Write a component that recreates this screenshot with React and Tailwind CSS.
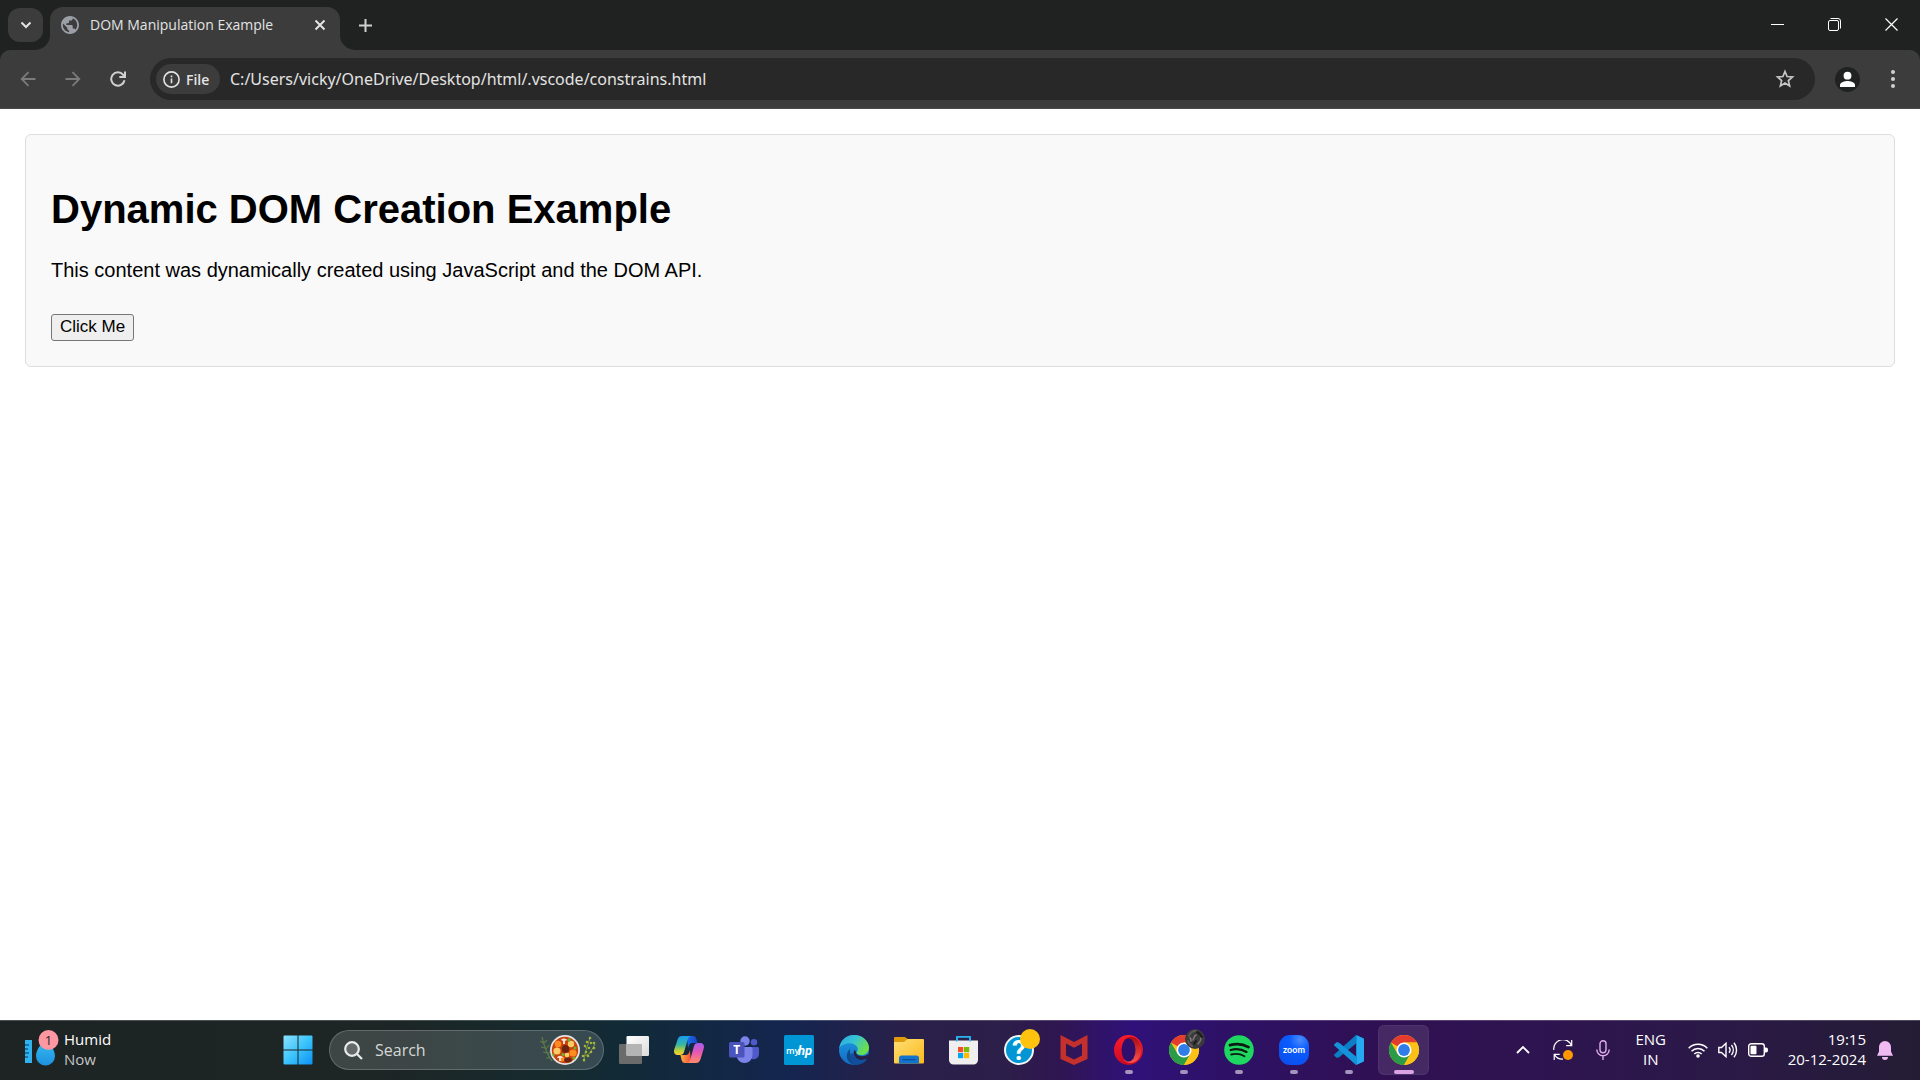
import React from "react";

const UI = "font-['Open_Sans','Noto_Sans',sans-serif]";

function Globe() {
  return (
    <svg viewBox="2 2 20 20" className="size-[18px] shrink-0" aria-hidden="true">
      <path
        d="M12 2C6.48 2 2 6.48 2 12s4.48 10 10 10 10-4.48 10-10S17.52 2 12 2zm-1 17.93c-3.95-.49-7-3.85-7-7.93 0-.62.08-1.21.21-1.79L9 15v1c0 1.1.9 2 2 2v1.93zm6.9-2.54c-.26-.81-1-1.39-1.900-1.39h-1v-3c0-.55-.45-1-1-1H8v-2h2c.55 0 1-.45 1-1V7h2c1.100 0 2-.9 2-2v-.41c2.930 1.190 5 4.060 5 7.410 0 2.080-.8 3.970-2.100 5.390z"
        fill="#9aa0a6"
      />
    </svg>
  );
}

function TabStrip() {
  return (
    <header className="flex h-[50px] shrink-0 items-end bg-[#202221]">
      <button
        aria-label="Search tabs"
        className="mb-2 ml-2 flex h-[34px] w-[35px] items-center justify-center rounded-xl bg-[#3c3c3c]"
      >
        <svg viewBox="0 0 12 8" className="h-2 w-3" fill="none" stroke="#e3e3e3" strokeWidth="2">
          <path d="M1.500 1.500 6 6l4.500-4.500" />
        </svg>
      </button>
      <div className="relative ml-[7px] flex h-[43px] w-[290px] items-center rounded-t-[13px] bg-[#3c3c3c] pb-2 pl-[11px] pr-[10px]">
        <svg viewBox="0 0 15 15" className="absolute -left-[15px] bottom-0 size-[15px]">
          <path d="M15 0v15H0A15 15 0 0 0 15 0z" fill="#3c3c3c" />
        </svg>
        <svg viewBox="0 0 15 15" className="absolute -right-[15px] bottom-0 size-[15px]">
          <path d="M0 0v15h15A15 15 0 0 1 0 0z" fill="#3c3c3c" />
        </svg>
        <Globe />
        <span className="ml-[11px] grow whitespace-nowrap text-[14px] leading-5 text-[#e3e3e3]">
          DOM Manipulation Example
        </span>
        <button aria-label="Close tab" className="flex size-5 items-center justify-center">
          <svg viewBox="0 0 12 12" className="size-3" stroke="#e3e3e3" strokeWidth="2">
            <path d="m1.500 1.500 9 9m0-9-9 9" />
          </svg>
        </button>
      </div>
      <button aria-label="New tab" className="mb-[10px] ml-[10px] flex size-[30px] items-center justify-center">
        <svg viewBox="0 0 13 13" className="size-[13px]" stroke="#d0d0d0" strokeWidth="2">
          <path d="M6.500 0v13M0 6.500h13" />
        </svg>
      </button>
      <div className="ml-auto flex h-12 self-start">
        <button aria-label="Minimize" className="flex w-[57px] items-center justify-center">
          <svg viewBox="0 0 13 13" className="size-[13px]" stroke="#fff" strokeWidth="1">
            <path d="M0 6.500h13" />
          </svg>
        </button>
        <button aria-label="Restore" className="flex w-[57px] items-center justify-center">
          <svg viewBox="0 0 13 13" className="size-[13px]" stroke="#fff" strokeWidth="1" fill="none">
            <rect x=".5" y="2.500" width="10" height="10" rx="1.500" />
            <path d="M2.500.5h7.500a2.500 2.500 0 0 1 2.500 2.500v7.500" />
          </svg>
        </button>
        <button aria-label="Close window" className="flex w-[57px] items-center justify-center">
          <svg viewBox="0 0 13 13" className="size-[13px]" stroke="#fff" strokeWidth="1.200">
            <path d="m.5.5 12 12m0-12-12 12" />
          </svg>
        </button>
      </div>
    </header>
  );
}

function Toolbar() {
  return (
    <div className="shrink-0 bg-[#202221]">
      <div className="flex items-center rounded-t-[10px] border-b border-[#4a4a4a] bg-[#3c3c3c] py-2 px-[5px]">
        <button aria-label="Back" className="flex w-[45px] justify-center">
          <svg viewBox="0 0 16 16" className="size-4" fill="none" stroke="#7b7b7b" strokeWidth="1.800">
            <path d="M15.500 8H2M8.500 1.200 1.700 8l6.800 6.800" />
          </svg>
        </button>
        <button aria-label="Forward" className="flex w-[45px] justify-center">
          <svg viewBox="0 0 16 16" className="size-4" fill="none" stroke="#7b7b7b" strokeWidth="1.800">
            <path d="M.5 8H14M7.500 1.200 14.300 8l-6.800 6.800" />
          </svg>
        </button>
        <button aria-label="Reload" className="flex w-[45px] justify-center">
          <svg viewBox="0 0 16 16" className="size-4" fill="none" stroke="#d0d0d0" strokeWidth="2">
            <path d="M14.500 9.200A6.700 6.700 0 1 1 13.200 3.800L15 5.600" />
            <path d="M15 .5v5.600H9.300" />
          </svg>
        </button>
        <div className="mx-[10px] flex h-[42px] grow items-center rounded-full bg-[#282828] pl-[6px] pr-[10px]">
          <button className="flex h-[30px] w-16 shrink-0 items-center gap-[6px] rounded-full bg-[#3c3c3c] pl-[7px] text-[14px] font-semibold text-[#e3e3e3]">
            <svg viewBox="0 0 17 17" className="size-[17px] shrink-0" fill="none" stroke="#e3e3e3" strokeWidth="1.600">
              <circle cx="8.500" cy="8.500" r="7.600" />
              <path d="M8.500 7.600v4.600M8.500 4.500v1.700" />
            </svg>
            File
          </button>
          <input
            aria-label="Address"
            className="ml-[10px] min-w-0 grow bg-transparent font-['Noto_Sans',sans-serif] text-[16px] leading-6 text-[#e3e3e3] outline-none"
            defaultValue="C:/Users/vicky/OneDrive/Desktop/html/.vscode/constrains.html"
          />
          <button aria-label="Bookmark this page" className="flex w-10 justify-center">
            <svg viewBox="0 0 20 20" className="size-5" fill="none" stroke="#c7c7c7" strokeWidth="1.700">
              <path d="m10 2.500 2.100 5 5.400.5-4.100 3.600 1.200 5.300-4.600-2.800-4.600 2.800 1.200-5.300L2.500 8l5.400-.5z" />
            </svg>
          </button>
        </div>
        <button aria-label="Profile" className="flex w-[45px] justify-center">
          <svg viewBox="0 0 25 25" className="size-[25px]">
            <circle cx="12.500" cy="12.500" r="12.500" fill="#202221" />
            <circle cx="12.500" cy="8.700" r="3.900" fill="#fff" />
            <path d="M5 20v-2c0-2.600 5-4 7.500-4s7.500 1.400 7.500 4v2z" fill="#fff" />
          </svg>
        </button>
        <button aria-label="Menu" className="flex w-[45px] justify-center">
          <svg viewBox="0 0 4 18" className="h-[18px] w-1" fill="#d0d0d0">
            <circle cx="2" cy="2" r="2" />
            <circle cx="2" cy="9" r="2" />
            <circle cx="2" cy="16" r="2" />
          </svg>
        </button>
      </div>
    </div>
  );
}

function Page() {
  return (
    <main className="grow bg-white p-[25px] font-['Liberation_Sans',sans-serif] text-black">
      <section className="rounded-md border border-[#ddd] bg-[#f9f9f9] px-[25px] pb-[25px] pt-[51px]">
        <h1 className="text-[40px] font-bold leading-[46px]">Dynamic DOM Creation Example</h1>
        <p className="mt-[26px] text-[20px] leading-6">
          This content was dynamically created using JavaScript and the DOM API.
        </p>
        <button className="mt-8 block h-[27px] rounded-[3px] border border-[#767676] bg-[#efefef] px-2 pb-[2px] text-[17px] leading-5">
          Click Me
        </button>
      </section>
    </main>
  );
}

function Icon({ children }) {
  return (
    <svg viewBox="0 0 30 30" className="size-[30px] overflow-visible" aria-hidden="true">
      {children}
    </svg>
  );
}

function StartIcon() {
  return (
    <Icon>
      <defs>
        <linearGradient id="win" x1="0" y1="0" x2="30" y2="30" gradientUnits="userSpaceOnUse">
          <stop offset="0" stopColor="#8fe3ff" />
          <stop offset=".5" stopColor="#3cc4fb" />
          <stop offset="1" stopColor="#0a8ff5" />
        </linearGradient>
      </defs>
      <path
        fill="url(#win)"
        d="M1.500 .5H14.500V14.500H.5V1.500a1 1 0 0 1 1-1zM15.500 .5h13a1 1 0 0 1 1 1v13h-14zM.5 15.500h14v14h-13a1 1 0 0 1-1-1zM15.500 15.500h14v13a1 1 0 0 1-1 1h-13z"
      />
    </Icon>
  );
}

function StewArt() {
  return (
    <svg viewBox="0 0 56 32" className="h-8 w-14 shrink-0" aria-hidden="true">
      <g stroke="#5f7848" strokeWidth="1.200" fill="none">
        <path d="M2 3c2 9 4 16 10 24M3 9 0 7M4 9l3-3M5 14l-4-1M6 15l3-4M7 19l-4-1M8 20l3-4M10 24l-4 0" />
      </g>
      <g stroke="#7f9a35" strokeWidth="1" fill="none">
        <path d="M44 28c0-8 3-14 6-24M45 22l5-3 5-9M47 15l-3-4" />
      </g>
      <g fill="#a2b53a">
        <circle cx="50" cy="4" r="1.300" /><circle cx="47" cy="8" r="1.300" /><circle cx="51" cy="9" r="1.300" />
        <circle cx="45" cy="12" r="1.300" /><circle cx="49" cy="14" r="1.300" /><circle cx="54" cy="9" r="1.300" />
        <circle cx="54" cy="14" r="1.300" /><circle cx="51" cy="18" r="1.300" /><circle cx="46" cy="18" r="1.300" />
        <circle cx="48" cy="22" r="1.300" /><circle cx="43" cy="22" r="1.300" /><circle cx="44" cy="26" r="1.300" />
      </g>
      <circle cx="25" cy="16" r="15" fill="#e6e3e1" />
      <circle cx="25" cy="16" r="13.200" fill="#c9420e" />
      <g fill="#ff8a1f">
        <circle cx="18" cy="10" r="3.300" /><circle cx="33" cy="19" r="3.600" /><circle cx="22" cy="25" r="2.500" />
      </g>
      <g fill="#ffc965">
        <circle cx="17" cy="17" r="3.600" /><circle cx="31" cy="10" r="3.200" /><circle cx="27" cy="21" r="2.400" />
      </g>
      <g fill="#6b2410">
        <ellipse cx="25.500" cy="15" rx="3.600" ry="4" /><ellipse cx="28" cy="26" rx="3.800" ry="2.500" />
      </g>
      <g fill="#f7e2d2">
        <path d="M21 6c1-2 5-2 6 0l-2 1v3h-2V7zM17 24c1-3 5-3 6 0l-2 0v3h-2v-3z" />
      </g>
      <g fill="#69b52c">
        <circle cx="29" cy="6" r="1.700" /><circle cx="23" cy="20.500" r="1.600" /><circle cx="35" cy="14" r="1.500" />
        <circle cx="13.500" cy="21" r="1.200" /><circle cx="34" cy="24" r="1.500" />
      </g>
    </svg>
  );
}

function TaskViewIcon() {
  return (
    <Icon>
      <defs>
        <linearGradient id="tv" x1="0" y1="0" x2="1" y2="1">
          <stop offset="0" stopColor="#fff" />
          <stop offset="1" stopColor="#dcdcdc" />
        </linearGradient>
      </defs>
      <rect x="0" y="9" width="23" height="20" rx="1.200" fill="#6b6b6b" />
      <rect x="7.500" y="1" width="22.500" height="20" rx="1.200" fill="url(#tv)" />
      <path d="M7.500 9H22a1 1 0 0 1 1 1v11H8.500a1 1 0 0 1-1-1z" fill="#b4b4b4" />
    </Icon>
  );
}

function CopilotIcon() {
  return (
    <Icon>
      <defs>
        <linearGradient id="cpA" x1="0" y1="0" x2="0" y2="1">
          <stop offset="0" stopColor="#1a9bf0" />
          <stop offset=".45" stopColor="#35b6a4" />
          <stop offset=".75" stopColor="#b8cf3c" />
          <stop offset="1" stopColor="#ffd02e" />
        </linearGradient>
        <linearGradient id="cpB" x1="0" y1="0" x2="0" y2="1">
          <stop offset="0" stopColor="#a65df0" />
          <stop offset=".45" stopColor="#e557b4" />
          <stop offset="1" stopColor="#ff8a66" />
        </linearGradient>
        <linearGradient id="cpC" x1="0" y1="0" x2="1" y2="0">
          <stop offset="0" stopColor="#1c6fe8" />
          <stop offset="1" stopColor="#1840c8" />
        </linearGradient>
        <linearGradient id="cpD" x1="0" y1="0" x2="1" y2="0">
          <stop offset="0" stopColor="#ffae3d" />
          <stop offset="1" stopColor="#f0503c" />
        </linearGradient>
      </defs>
      <path d="M13 1h6c2 0 2.800 1 3.400 3L23.600 8h-5c-3 0-3.600 2-4.600 5z" fill="url(#cpC)" />
      <path d="M17 28h-6c-2 0-2.800-1-3.400-3L6.400 20h5c3 0 3.600-2 4.600-5z" fill="url(#cpD)" />
      <path d="M8 1h9c-2 .4-2.800 2-3.400 4L10 17c-.8 2.200-1.800 3-4 3H4c-3.500 0-4.700-2.500-3.600-6L3.600 4.500C4.500 2 5.800 1 8 1z" fill="url(#cpA)" />
      <path d="M22 28h-9c2-.4 2.800-2 3.400-4L20 11c.8-2.200 1.800-3 4-3h2c3.500 0 4.700 2.500 3.600 6l-3.200 10.500C25.500 27 24.200 28 22 28z" fill="url(#cpB)" />
    </Icon>
  );
}

function TeamsIcon() {
  return (
    <Icon>
      <circle cx="25" cy="7.300" r="3.200" fill="#5059c9" />
      <path d="M21 12h7.500c.8 0 1.500.7 1.500 1.500V19a5.500 5.500 0 0 1-9 4z" fill="#5059c9" />
      <circle cx="16" cy="6" r="4.700" fill="#7b83eb" />
      <path d="M9 12h13a1.500 1.500 0 0 1 1.500 1.500V20a8 8 0 0 1-16 0v-6.500C7.500 12.700 8 12 9 12z" fill="#7b83eb" />
      <rect x="0" y="7" width="15.500" height="15.500" rx="1.500" fill="#4b53bc" />
      <text x="7.700" y="19" textAnchor="middle" fontSize="12" fontWeight="700" fill="#fff" fontFamily="Open Sans, sans-serif">T</text>
    </Icon>
  );
}

function HpIcon() {
  return (
    <Icon>
      <rect width="30" height="30" rx="1.500" fill="#0096d6" />
      <text x="2" y="18.500" fontSize="9" fontWeight="600" fill="#fff" fontFamily="Open Sans, sans-serif">my</text>
      <text x="14" y="20" fontSize="13" fontWeight="700" fontStyle="italic" fill="#fff" fontFamily="Roboto, sans-serif">hp</text>
    </Icon>
  );
}

function EdgeIcon() {
  return (
    <Icon>
      <defs>
        <linearGradient id="edA" x1="0" y1="0" x2="1" y2=".5">
          <stop offset="0" stopColor="#2aa7e0" />
          <stop offset=".5" stopColor="#36c3d6" />
          <stop offset="1" stopColor="#6be04a" />
        </linearGradient>
        <linearGradient id="edB" x1="0" y1="0" x2="0" y2="1">
          <stop offset="0" stopColor="#1b9de2" />
          <stop offset="1" stopColor="#1569c4" />
        </linearGradient>
      </defs>
      <circle cx="15" cy="15" r="15" fill="url(#edB)" />
      <path d="M11 17c0 7 6 12 17 7.500A15 15 0 0 1 17 30C8 29 5 20 11 14z" fill="#114a8b" />
      <path d="M.3 13C1.500 5 7.500 0 15 0c9 0 15 6.500 15 12.500 0 5-3.500 7.500-7.500 7.500-3 0-5-1-5-2.200 0-.9 1.300-1.300 1.300-3.600 0-2.900-3.300-6-8-6-4.800 0-9 2.500-10.500 4.800z" fill="url(#edA)" />
      <path d="M17 17.500c0 1.500 2 3.700 6 3.700 2.500 0 4.500-.7 6-1.900l.5.200c-.5 2-1 3-1.800 4.200-6.500 3-12.700.6-13.200-5 0-1.500.5-3 1.500-4z" fill="#272148" />
      <path d="M15.500 20c1.500 5 7 6.500 12.500 4-2 3-6 5.600-10 5.800C12 29 10 22 12 18z" fill="#114f9c" />
    </Icon>
  );
}

function FolderIcon() {
  return (
    <Icon>
      <defs>
        <linearGradient id="fo" x1="0" y1="0" x2="1" y2="1">
          <stop offset="0" stopColor="#ffdf75" />
          <stop offset="1" stopColor="#fbb91c" />
        </linearGradient>
      </defs>
      <path d="M1 2h9.500c1.200 0 1.700 1.500 3 1.500V9H0V3a1 1 0 0 1 1-1z" fill="#e09b0a" />
      <path d="M0 7h10l3.500-3H29a1 1 0 0 1 1 1v22.500a1 1 0 0 1-1 1H1a1 1 0 0 1-1-1z" fill="url(#fo)" />
      <path d="M5 28.500V23c0-1.400 1-2.500 2.500-2.500h15c1.500 0 2.500 1.100 2.500 2.500v5.500z" fill="#1374cf" />
      <path d="M8.500 24.700h13" stroke="#0a4d95" strokeWidth="1.300" />
    </Icon>
  );
}

function StoreIcon() {
  return (
    <Icon>
      <path d="M8 7V1.800h13V7" fill="none" stroke="#2bb3f0" strokeWidth="1.800" />
      <path d="M0 5.500h29V25a4.500 4.500 0 0 1-4.500 4.500h-20A4.500 4.500 0 0 1 0 25z" fill="#efefef" />
      <path d="M7.800 3v3.500M21.200 3v3.500" stroke="#2bb3f0" strokeWidth="1.600" />
      <rect x="9" y="12" width="5.200" height="5.200" fill="#f25022" />
      <rect x="15" y="12" width="5.200" height="5.200" fill="#7fba00" />
      <rect x="9" y="18" width="5.200" height="5.200" fill="#00a4ef" />
      <rect x="15" y="18" width="5.200" height="5.200" fill="#ffb900" />
    </Icon>
  );
}

function HelpIcon() {
  return (
    <Icon>
      <circle cx="15" cy="15" r="14" fill="#0096d6" stroke="#f4f4f4" strokeWidth="2" />
      <text x="15" y="25" textAnchor="middle" fontSize="28" fontWeight="700" fill="#fff" fontFamily="Roboto, sans-serif">?</text>
      <circle cx="26" cy="4" r="10" fill="#ffc20e" />
    </Icon>
  );
}

function McAfeeIcon() {
  return (
    <Icon>
      <path
        fillRule="evenodd"
        fill="#c4302c"
        d="M1.500 0 15 7 28.500 0v24L15 30 1.500 24zM7 8.500v12l8 4 8-4v-12l-8 4.200z"
      />
    </Icon>
  );
}

function OperaIcon() {
  return (
    <Icon>
      <defs>
        <linearGradient id="opA" x1="0" y1="0" x2="0" y2="1">
          <stop offset="0" stopColor="#ff1b2d" />
          <stop offset="1" stopColor="#c80a20" />
        </linearGradient>
        <linearGradient id="opB" x1="0" y1="0" x2="0" y2="1">
          <stop offset="0" stopColor="#a80a10" />
          <stop offset="1" stopColor="#ff5550" />
        </linearGradient>
      </defs>
      <ellipse cx="14.500" cy="15" rx="14.500" ry="15" fill="url(#opA)" />
      <path d="M10 5c3-3.500 9-4 13-.5a15 15 0 0 1 0 21c-4 3.500-10 3-13-.5z" fill="url(#opB)" />
      <ellipse cx="14.500" cy="15" rx="7" ry="11.500" fill="#300f6c" />
    </Icon>
  );
}

function ChromeMark() {
  return (
    <g>
      <circle cx="15" cy="15" r="15" fill="#fbc116" />
      <path d="M15 15 2 7.500A15 15 0 0 1 28 7.500H15z" fill="#e33b2e" />
      <path d="M2 7.500A15 15 0 0 0 15 30l6.500-11.200L15 15 8.500 18.800z" fill="#2a9b46" />
      <path d="M21.500 18.700 15 30A15 15 0 0 0 28 7.500H15z" fill="#fbc116" />
      <circle cx="15" cy="15" r="7.500" fill="#fff" />
      <circle cx="15" cy="15" r="5.900" fill="#2f7de9" />
    </g>
  );
}

function ChromeProfileIcon() {
  return (
    <Icon>
      <ChromeMark />
      <circle cx="26" cy="4" r="10" fill="#3a3a3a" />
      <g fill="none" strokeLinecap="round">
        <path d="M20 1c1-3 4-5 7-5M19 6c1 3 2 4 4 5" stroke="#5a5a5a" strokeWidth="2" />
        <path d="M24 5c1-2 1-4 3-5M29 9c2-2 3-3 3-6" stroke="#777" strokeWidth="1.600" />
        <path d="M28-3c2 1 4 3 5 5M25 9l2-3" stroke="#1c1c1c" strokeWidth="2" />
        <path d="M21 3c1 0 1 2 1 3" stroke="#8a8a8a" strokeWidth="1.400" />
      </g>
    </Icon>
  );
}

function ChromeIcon() {
  return (
    <Icon>
      <ChromeMark />
    </Icon>
  );
}

function SpotifyIcon() {
  return (
    <Icon>
      <circle cx="15" cy="15" r="14.800" fill="#1ed760" />
      <g fill="none" stroke="#0c1a12" strokeLinecap="round">
        <path d="M6 10.200c6-1.700 13-1.200 18.500 1.900" strokeWidth="2.800" />
        <path d="M6.700 15c5.200-1.500 11-.9 15.800 1.900" strokeWidth="2.300" />
        <path d="M7.200 19.500c4.700-1.200 9.200-.7 13.300 1.700" strokeWidth="1.900" />
      </g>
    </Icon>
  );
}

function ZoomIcon() {
  return (
    <Icon>
      <defs>
        <radialGradient id="zo" cx=".7" cy=".15" r=".9">
          <stop offset="0" stopColor="#4a8cff" />
          <stop offset=".4" stopColor="#0b5cff" />
          <stop offset="1" stopColor="#0b50ee" />
        </radialGradient>
      </defs>
      <rect width="30" height="30" rx="11" fill="url(#zo)" />
      <text x="15" y="17.500" textAnchor="middle" fontSize="9" fontWeight="700" fill="#fff" fontFamily="Lato, sans-serif">zoom</text>
    </Icon>
  );
}

function CodeIcon() {
  return (
    <Icon>
      <path d="M22 0 30 3.500V26.500L22 30 V8.500L5.500 22 3 23 .5 21c-.6-.6-.5-1.300 0-1.800z" fill="#0b7ec4" />
      <path d="M22 30V21.500L5.500 8 3 7 .5 9c-.6.6-.5 1.300 0 1.800z" fill="#1593da" />
      <path d="M22 0 29 3.200c.6.300 1 .9 1 1.500v20.600c0 .6-.4 1.200-1 1.500L22 30c.5-.3.600-.7.600-1.300V1.300c0-.6-.1-1-.6-1.300z" fill="#27a9f2" />
    </Icon>
  );
}

const APPS = [
  { name: "Task view", icon: TaskViewIcon },
  { name: "Copilot", icon: CopilotIcon },
  { name: "Teams", icon: TeamsIcon },
  { name: "myHP", icon: HpIcon },
  { name: "Edge", icon: EdgeIcon },
  { name: "File Explorer", icon: FolderIcon },
  { name: "Store", icon: StoreIcon },
  { name: "Support", icon: HelpIcon },
  { name: "McAfee", icon: McAfeeIcon },
  { name: "Opera", icon: OperaIcon, open: true },
  { name: "Chrome profile", icon: ChromeProfileIcon, open: true },
  { name: "Spotify", icon: SpotifyIcon, open: true },
  { name: "Zoom", icon: ZoomIcon, open: true },
  { name: "Code", icon: CodeIcon, open: true },
  { name: "Chrome", icon: ChromeIcon, active: true },
];

function AppButton({ name, icon: Glyph, open, active }) {
  return (
    <button
      aria-label={name}
      className={`relative mx-[2px] flex h-[50px] w-[51px] items-center justify-center rounded-md border ${
        active ? "border-white/5 bg-white/10" : "border-transparent"
      }`}
    >
      <Glyph />
      {open && <span className="absolute bottom-0 h-1 w-2 rounded-full bg-[#a493bd]" />}
      {active && <span className="absolute bottom-0 h-1 w-5 rounded-full bg-[#dba2e6]" />}
    </button>
  );
}

function WeatherIcon() {
  return (
    <svg viewBox="0 0 36 38" className="h-[38px] w-9" aria-hidden="true">
      <defs>
        <linearGradient id="drop" x1="0" y1="0" x2="0" y2="1">
          <stop offset="0" stopColor="#37c2f2" />
          <stop offset="1" stopColor="#1e90df" />
        </linearGradient>
      </defs>
      <rect x="0" y="10" width="7" height="23" fill="#2fb2ee" />
      <path d="M0 15h4M0 19h3M0 23h4M0 27h3" stroke="#0d5f96" strokeWidth="1.300" />
      <path d="M20.500 8c3 5 9.500 11 9.500 18a9.500 9.500 0 0 1-19 0c0-7 6.500-13 9.500-18z" fill="url(#drop)" />
      <circle cx="23.500" cy="10" r="10" fill="#fd98a3" />
      <text x="23.500" y="15" textAnchor="middle" fontSize="13" fill="#222" fontFamily="Open Sans, sans-serif">1</text>
    </svg>
  );
}

function Tray() {
  return (
    <div className="ml-auto flex shrink-0 items-center text-[15px] leading-5 text-white">
      <button aria-label="Show hidden icons" className="flex w-10 justify-center">
        <svg viewBox="0 0 14 8" className="h-2 w-[14px]" fill="none" stroke="#fff" strokeWidth="1.800">
          <path d="m1 7 6-6 6 6" />
        </svg>
      </button>
      <button aria-label="Update" className="flex w-10 justify-center">
        <svg viewBox="0 0 20 20" className="size-5" fill="none" stroke="#fff" strokeWidth="1.200">
          <path d="M.8 10A9.200 9.200 0 0 1 18.500 5.500M18.700 0v5.600h-5.500M1.200 20v-5.600h5.500M1.500 14.600A9.200 9.200 0 0 0 10 19.200" />
          <circle cx="15" cy="15" r="5" fill="#ff9800" stroke="none" />
        </svg>
      </button>
      <button aria-label="Microphone" className="flex w-10 justify-center">
        <svg viewBox="0 0 14 20" className="h-5 w-[14px]" fill="none" stroke="#dfaee8" strokeWidth="1.400">
          <rect x="4" y=".8" width="6" height="12" rx="3" />
          <path d="M.8 9.500a6.200 6.200 0 0 0 12.400 0M7 15.700V20" />
        </svg>
      </button>
      <button className="w-14 pb-[2px] text-center">
        ENG
        <br />
        IN
      </button>
      <button aria-label="Network, volume and battery" className="ml-[9px] flex items-center gap-[10px]">
        <svg viewBox="0 0 20 16" className="h-4 w-5" fill="none" stroke="#fff" strokeWidth="1.500">
          <path d="M.7 6.200a13 13 0 0 1 18.600 0M3.500 9.200a9 9 0 0 1 13 0M6.300 12a5.200 5.200 0 0 1 7.400 0" />
          <circle cx="10" cy="14" r="1.800" fill="#fff" stroke="none" />
        </svg>
        <svg viewBox="0 0 20 16" className="h-4 w-5" fill="none" stroke="#fff" strokeWidth="1.400">
          <path d="M.8 5.500h2.700L8 1.300v13.400l-4.500-4.200H.8zM11 5.200a4.500 4.500 0 0 1 0 5.600M13.500 3a8 8 0 0 1 0 10M16 .8a11.500 11.500 0 0 1 0 14.400" />
        </svg>
        <svg viewBox="0 0 20 14" className="h-[14px] w-5" fill="none" stroke="#fff" strokeWidth="1.400">
          <rect x=".7" y=".7" width="15.600" height="12.600" rx="2.600" />
          <rect x="2.500" y="2.800" width="6" height="8.400" rx="1" fill="#fff" stroke="none" />
          <path d="M17 4.500h1.200c1 0 1.800.8 1.800 2.500s-.8 2.500-1.800 2.500H17z" fill="#fff" stroke="none" />
        </svg>
      </button>
      <button className="ml-5 whitespace-nowrap pb-[2px] text-right">
        19:15
        <br />
        20-12-2024
      </button>
      <button aria-label="Notifications" className="ml-[11px] mr-[27px]">
        <svg viewBox="0 0 16 19" className="h-[19px] w-4" fill="#f0b9f2">
          <path d="M8 0a6 6 0 0 1 6 6v4.500l2 4.300H0l2-4.300V6a6 6 0 0 1 6-6zM5 16h6a3 3 0 0 1-6 0z" />
        </svg>
      </button>
    </div>
  );
}

function Taskbar() {
  return (
    <footer className="flex h-[60px] shrink-0 items-center border-t border-white/20 bg-[linear-gradient(90deg,#1e2424_0%,#1d2525_20%,#162b2f_29%,#112a38_33%,#14254f_41%,#29204a_47%,#2c1f49_52%,#2f1650_55%,#30117a_59%,#2d1165_64%,#301053_72%,#2e1450_80%,#2a1946_90%,#241c34_100%)] pb-px">
      <div className="flex w-[270px] shrink-0 pl-[25px]">
        <button className="flex items-center gap-[3px] pb-[2px] text-left text-[15px] leading-5 text-white">
          <WeatherIcon />
          <span>
            Humid
            <br />
            <span className="text-[#c4c6c6]">Now</span>
          </span>
        </button>
      </div>
      <button aria-label="Start" className="flex w-[55px] shrink-0 justify-center">
        <StartIcon />
      </button>
      <label className="ml-1 mr-[2px] flex h-10 w-[275px] shrink-0 items-center rounded-full border border-white/20 bg-white/15 pl-[14px] pr-[7px]">
        <svg viewBox="0 0 19 19" className="size-[19px] shrink-0" fill="none" stroke="#e8ecec" strokeWidth="2.200">
          <circle cx="8" cy="8" r="6.800" fill="#fff" fillOpacity=".2" />
          <path d="m13 13 5 5" />
        </svg>
        <input
          aria-label="Search"
          placeholder="Search"
          className="ml-3 min-w-0 grow bg-transparent text-[16px] leading-6 outline-none placeholder:text-[#d4d8d8]"
        />
        <StewArt />
      </label>
      <nav className="flex shrink-0">
        {APPS.map((app) => (
          <AppButton key={app.name} {...app} />
        ))}
      </nav>
      <Tray />
    </footer>
  );
}

export default function App() {
  return (
    <div className={`flex h-screen flex-col overflow-hidden bg-white ${UI}`}>
      <TabStrip />
      <Toolbar />
      <Page />
      <Taskbar />
    </div>
  );
}
